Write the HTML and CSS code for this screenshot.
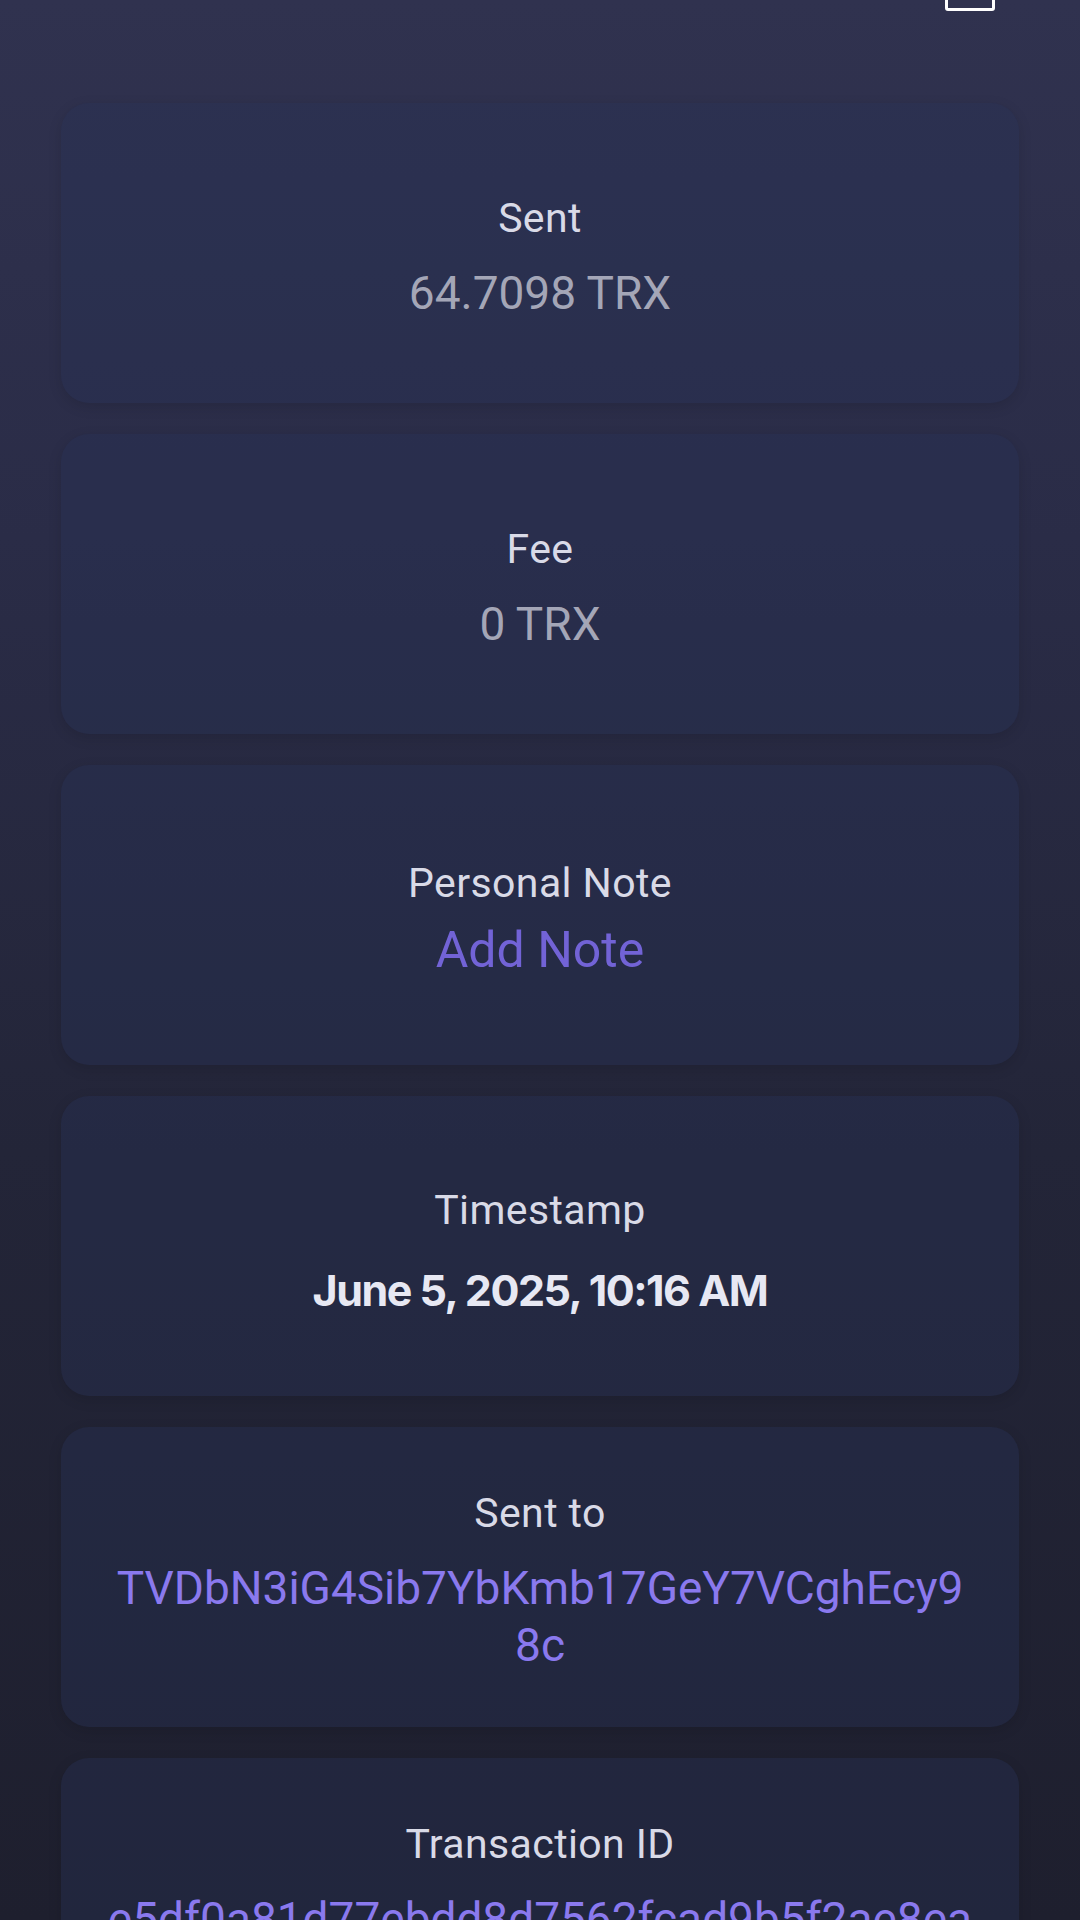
FILE: index.html
```html
<!DOCTYPE html>
<html lang="en">
<head>
  <meta charset="UTF-8">
  <title>Transaction Details</title>
  <meta name="viewport" content="width=device-width, initial-scale=1.0">
  <link rel="stylesheet" href="styles.css">
</head>
<body>
  <div id="screen">
    <div class="topbar">
      <div class="top-icon"></div>
    </div>

    <div class="details">
      <div class="card">
        <div class="label">Sent</div>
        <div class="value">64.7098 TRX</div>
      </div>

      <div class="card">
        <div class="label">Fee</div>
        <div class="value">0 TRX</div>
      </div>

      <div class="card">
        <div class="label">Personal Note</div>
        <div class="value note">Add Note</div>
      </div>

      <div class="card">
        <div class="label">Timestamp</div>
        <div class="value stamp">June 5, 2025, 10:16 AM</div>
      </div>

      <div class="card">
        <div class="label">Sent to</div>
        <div class="value address">TVDbN3iG4Sib7YbKmb17GeY7VCghEcy98c</div>
      </div>

      <div class="card">
        <div class="label">Transaction ID</div>
        <div class="value address">e5df0a81d77ebdd8d7562fcad9b5f2ae8ea4c1f07b93d2e6a58c04f1b7e2d935</div>
      </div>
    </div>
  </div>
</body>
</html>
```

FILE: styles.css
```css
* { box-sizing: border-box; }

html, body {
  margin: 0;
  height: 100%;
}

body {
  font-family: Roboto, 'Noto Sans', sans-serif;
  background: linear-gradient(180deg, #30324f 0%, #2a2c47 28%, #232538 60%, #1e1f2e 100%);
  color: #d9dae7;
  overflow: hidden;
}

#screen {
  width: 1080px;
  height: 1920px;
  overflow: hidden;
}

.topbar {
  height: 103px;
  display: flex;
  justify-content: flex-end;
  padding-right: 85px;
}

.top-icon {
  width: 50px;
  height: 50px;
  margin-top: -39px;
  border: 3px solid #ffffff;
  border-radius: 3px;
}

.details {
  display: flex;
  flex-direction: column;
  gap: 31px;
  padding: 0 61px;
}

.card {
  height: 300px;
  flex-shrink: 0;
  padding: 10px 45px 0;
  border-radius: 28px;
  background: rgba(40, 50, 86, 0.38);
  box-shadow: 0 4px 14px rgba(0, 0, 0, 0.12);
  display: flex;
  flex-direction: column;
  justify-content: center;
  align-items: center;
  text-align: center;
}

.label {
  font-size: 41px;
  line-height: 46px;
  letter-spacing: 0.4px;
  color: #d9dae7;
}

.value {
  margin-top: 24px;
  font-size: 46px;
  line-height: 57px;
  color: #a4a6b7;
}

.note {
  margin-top: 14px;
  font-size: 50px;
  line-height: 60px;
  color: #7263d6;
}

.stamp {
  margin-top: 31px;
  font-family: Inter, 'Noto Sans', sans-serif;
  font-weight: 700;
  font-size: 43px;
  line-height: 52px;
  letter-spacing: -1.5px;
  color: #e7e8f3;
}

.address {
  width: 100%;
  color: #8a79ee;
  word-break: break-all;
}
```
